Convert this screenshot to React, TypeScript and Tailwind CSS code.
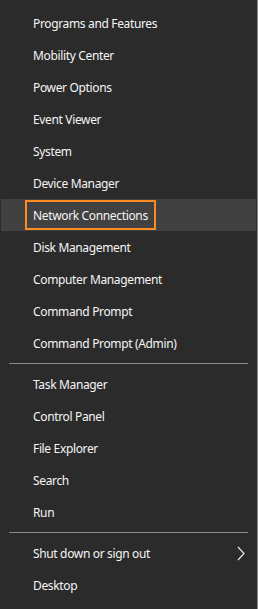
const groups: string[][] = [
  [
    'Programs and Features',
    'Mobility Center',
    'Power Options',
    'Event Viewer',
    'System',
    'Device Manager',
    'Network Connections',
    'Disk Management',
    'Computer Management',
    'Command Prompt',
    'Command Prompt (Admin)',
  ],
  ['Task Manager', 'Control Panel', 'File Explorer', 'Search', 'Run'],
  ['Shut down or sign out', 'Desktop'],
];

function Item({ label }: { label: string }) {
  const active = label === 'Network Connections';
  const submenu = label === 'Shut down or sign out';
  return (
    <div className={`flex h-[32px] items-center pl-[24px] pr-[11px] ${active ? 'bg-[#414141]' : ''}`}>
      <span
        className={`flex h-[30px] items-center px-[6px] pt-[1px] border-2 ${active ? 'border-[#ff8a1f]' : 'border-transparent'}`}
      >
        {label}
      </span>
      {submenu && (
        <svg className="ml-auto" width="8" height="15" viewBox="0 0 8 15" fill="none">
          <path d="M1 1l6 6.5L1 14" stroke="#e8e8e8" strokeWidth="1.2" />
        </svg>
      )}
    </div>
  );
}

export default function App() {
  return (
    <div className="flex h-[609px] w-[258px] bg-[#2b2b2b] font-['Noto_Sans',sans-serif] text-[12px] tracking-[-0.35px] text-[#f5f5f5]">
      <div className="flex-1 pl-[1px] pr-[1px] pt-[7px]">
        {groups.map((g, i) => (
          <div key={i}>
            {i > 0 && (
              <div className="flex h-[9px] items-center px-[8px]">
                <div className="h-px w-full bg-[#8a8a8a]" />
              </div>
            )}
            {g.map((label) => (
              <Item key={label} label={label} />
            ))}
          </div>
        ))}
      </div>
      <div className="w-px bg-[#8c8c8c]" />
    </div>
  );
}
